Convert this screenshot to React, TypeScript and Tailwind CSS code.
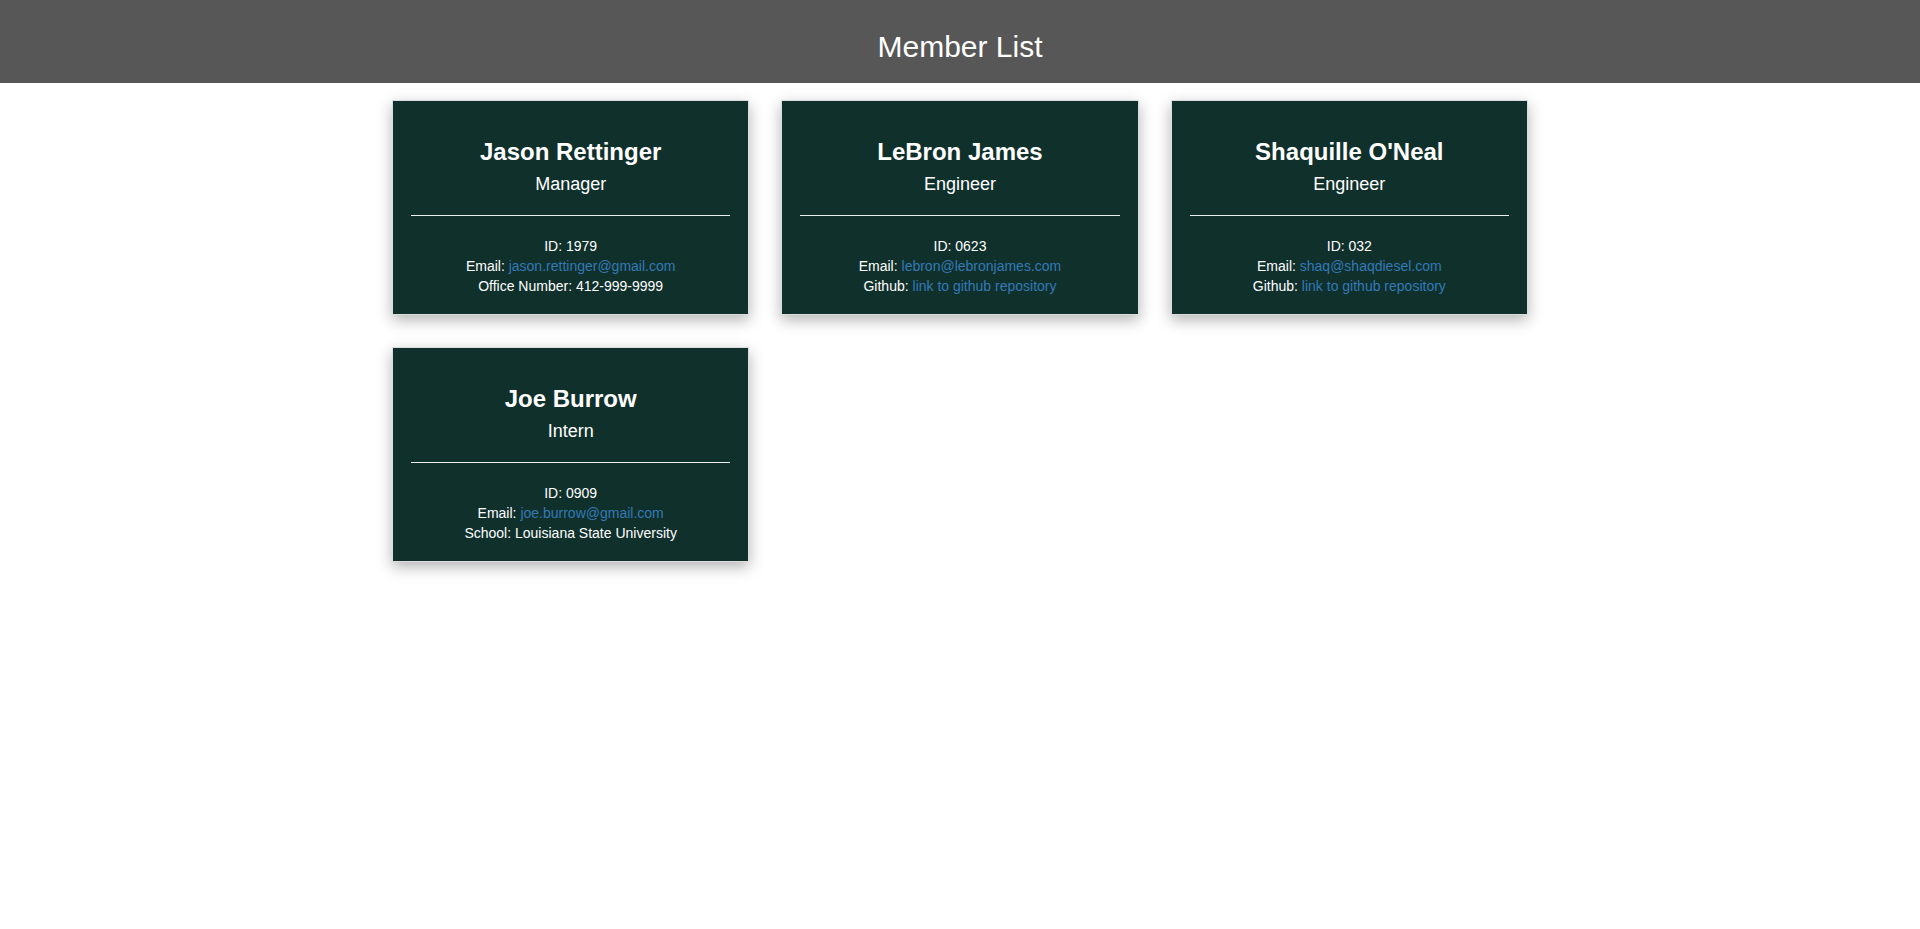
import React from "react";

type Member = {
  name: string;
  role: string;
  id: string;
  email: string;
  extraLabel: string;
  extraValue: string;
  extraLink?: boolean;
};

const members: Member[] = [
  { name: "Jason Rettinger", role: "Manager", id: "1979", email: "jason.rettinger@gmail.com", extraLabel: "Office Number", extraValue: "412-999-9999" },
  { name: "LeBron James", role: "Engineer", id: "0623", email: "lebron@lebronjames.com", extraLabel: "Github", extraValue: "link to github repository", extraLink: true },
  { name: "Shaquille O'Neal", role: "Engineer", id: "032", email: "shaq@shaqdiesel.com", extraLabel: "Github", extraValue: "link to github repository", extraLink: true },
  { name: "Joe Burrow", role: "Intern", id: "0909", email: "joe.burrow@gmail.com", extraLabel: "School", extraValue: "Louisiana State University" },
];

function Card({ m }: { m: Member }) {
  return (
    <div className="bg-[#10302c] border border-[#dcdcdc] shadow-[0_5px_14px_rgba(0,0,0,0.3)] text-white text-center pt-[37px] pb-[18px] px-[18px]">
      <div className="text-[24px] font-bold leading-[28px]">{m.name}</div>
      <div className="text-[18px] leading-[22px] mt-[7px]">{m.role}</div>
      <div className="h-px bg-[#eeeeee] mt-[20px]" />
      <div className="text-[14px] leading-[20px] mt-[20px]">
        <div>ID: {m.id}</div>
        <div>
          Email: <a className="text-[#337ab7]">{m.email}</a>
        </div>
        <div>
          {m.extraLabel}:{" "}
          {m.extraLink ? <a className="text-[#337ab7]">{m.extraValue}</a> : m.extraValue}
        </div>
      </div>
    </div>
  );
}

export default function App() {
  return (
    <div className="min-h-screen bg-white" style={{ fontFamily: '"Liberation Sans", Arial, sans-serif' }}>
      <header className="h-[83px] bg-[#575757] pt-[30px] text-center">
        <h1 className="text-[30px] leading-[33px] font-normal text-white">Member List</h1>
      </header>
      <main className="w-[1136px] mx-auto mt-[17px] grid grid-cols-3 gap-x-[32px] gap-y-[32px]">
        {members.map((m) => (
          <Card key={m.name} m={m} />
        ))}
      </main>
    </div>
  );
}
